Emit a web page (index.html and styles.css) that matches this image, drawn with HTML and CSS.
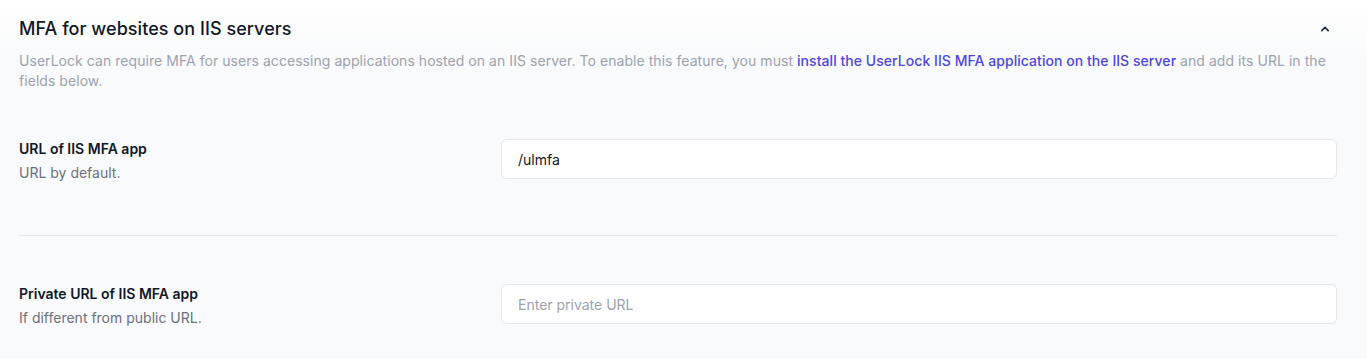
FILE: index.html
```html
<!DOCTYPE html>
<html lang="en">
<head>
    <meta charset="UTF-8">
    <meta name="viewport" content="width=device-width, initial-scale=1.0">
    <title>MFA for websites on IIS servers</title>
    <link rel="stylesheet" href="styles.css">
</head>
<body>
    <section class="panel">
        <div class="panel-head">
            <h2>MFA for websites on IIS servers</h2>
            <button class="toggle" aria-label="Collapse">
                <svg width="12" height="12" viewBox="0 0 12 12" fill="none">
                    <path d="M2.8 7.6 L6 4.4 L9.2 7.6" stroke="#1f2937" stroke-width="1.6" stroke-linecap="round" stroke-linejoin="round"/>
                </svg>
            </button>
        </div>
        <p class="intro">
            UserLock can require MFA for users accessing applications hosted on an IIS server. To enable this feature, you must
            <a href="#">install the UserLock IIS MFA application on the IIS server</a> and add its URL in the fields below.
        </p>

        <div class="field">
            <div class="field-label">
                <label for="public-url">URL of IIS MFA app</label>
                <span>URL by default.</span>
            </div>
            <input type="text" id="public-url" value="/ulmfa">
        </div>

        <div class="field">
            <div class="field-label">
                <label for="private-url">Private URL of IIS MFA app</label>
                <span>If different from public URL.</span>
            </div>
            <input type="text" id="private-url" placeholder="Enter private URL">
        </div>
    </section>
</body>
</html>
```

FILE: styles.css
```css
* {
    margin: 0;
    padding: 0;
    box-sizing: border-box;
}

body {
    font-family: Inter, 'Noto Sans', sans-serif;
    background: linear-gradient(180deg, #ffffff 0, #f9fafb 60px);
    color: #111827;
    min-height: 100vh;
}

.panel {
    padding: 15px 30px 0 19px;
}

.panel-head {
    display: flex;
    justify-content: space-between;
    align-items: center;
}

.panel-head h2 {
    font-size: 18px;
    line-height: 28px;
    font-weight: 500;
    letter-spacing: 0.05px;
    color: #111827;
}

.toggle {
    background: none;
    border: none;
    width: 16px;
    height: 16px;
    display: flex;
    align-items: center;
    justify-content: center;
    margin-right: 4px;
    cursor: pointer;
}

.intro {
    margin-top: 8px;
    font-size: 14px;
    line-height: 20px;
    letter-spacing: 0.05px;
    color: #9ca3af;
}

.intro a {
    color: #4f46e5;
    font-weight: 500;
    text-decoration: none;
}

.field {
    display: grid;
    grid-template-columns: 466px 1fr;
    column-gap: 16px;
    align-items: start;
    padding: 48px 0 52px;
}

.field + .field {
    border-top: 1px solid #e5e7eb;
}

.field-label {
    display: flex;
    flex-direction: column;
    gap: 4px;
    font-size: 14px;
    line-height: 20px;
}

.field-label label {
    font-weight: 600;
    color: #111827;
}

.field-label span {
    color: #6b7280;
}

.field input {
    height: 40px;
    width: 100%;
    border: 1px solid #e5e7eb;
    border-radius: 6px;
    background: #fff;
    padding: 0 16px;
    font-family: inherit;
    font-size: 14px;
    color: #111827;
    outline: none;
}

.field input::placeholder {
    color: #9ca3af;
}
```
